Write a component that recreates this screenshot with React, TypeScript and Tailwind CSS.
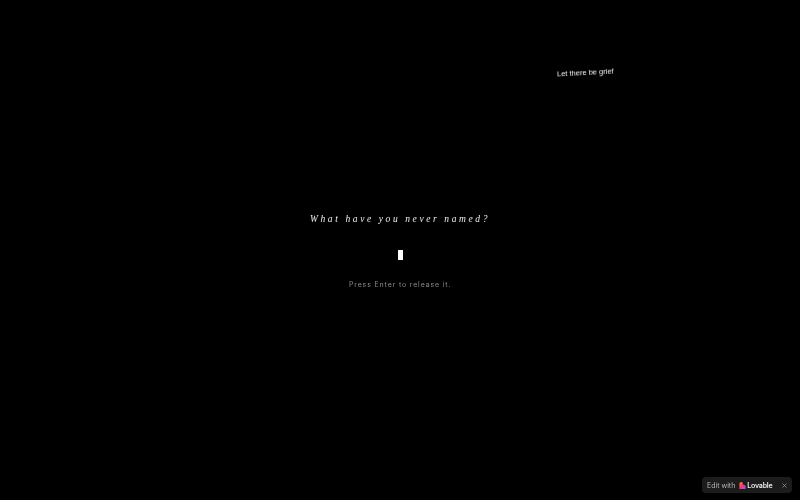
import React from "react";
import { X } from "lucide-react";

const LovableLogo = () => (
  <svg width="7" height="7" viewBox="0 0 7 8" className="flex-none">
    <defs>
      <linearGradient id="lov" x1="0" y1="0" x2="1" y2="1">
        <stop offset="0" stopColor="#ff8a3c" />
        <stop offset="0.5" stopColor="#f5386c" />
        <stop offset="1" stopColor="#8a5cf6" />
      </linearGradient>
    </defs>
    <path d="M2 0a2 2 0 0 1 2 2v1h1a2 2 0 0 1 2 2v3H0V2a2 2 0 0 1 2-2z" fill="url(#lov)" />
  </svg>
);

export default function App() {
  return (
    <div className="relative h-[500px] w-[800px] overflow-hidden bg-black">
      <span className="absolute left-[556.5px] top-[66.5px] -rotate-3 font-['Liberation_Sans',sans-serif] text-[7.5px] leading-[12px] whitespace-nowrap text-[#f0f0f0] will-change-transform">
        Let there be grief
      </span>

      <div className="flex h-full flex-col items-center pt-[212px]">
        <h1 className="font-['Liberation_Serif',serif] text-[9.5px] leading-[14px] italic tracking-[2.6px] whitespace-nowrap text-[#ededed] will-change-transform">
          What have you never named?
        </h1>
        <div className="mt-[24px] h-[10px] w-[5px] bg-white" />
        <p className="mt-[20px] font-['Inter',sans-serif] text-[7px] leading-[10px] tracking-[0.85px] whitespace-nowrap text-[#8a8a8a] will-change-transform">
          Press Enter to release it.
        </p>
      </div>

      <div className="absolute right-[8px] bottom-[7px] flex h-[16px] w-[90px] items-center rounded-[4px] bg-[#1c1c1c] pl-[5px] font-['Inter',sans-serif] will-change-transform">
        <span className="text-[7px] leading-none whitespace-nowrap text-[#b5b5b5]">Edit with</span>
        <span className="ml-[4px] flex items-center gap-[1px]">
          <LovableLogo />
          <span className="text-[7px] leading-none font-semibold tracking-[-0.2px] whitespace-nowrap text-[#ececec]">Lovable</span>
        </span>
        <X className="ml-auto mr-[4px] text-[#b0b0b0]" size={7} strokeWidth={2} />
      </div>
    </div>
  );
}
